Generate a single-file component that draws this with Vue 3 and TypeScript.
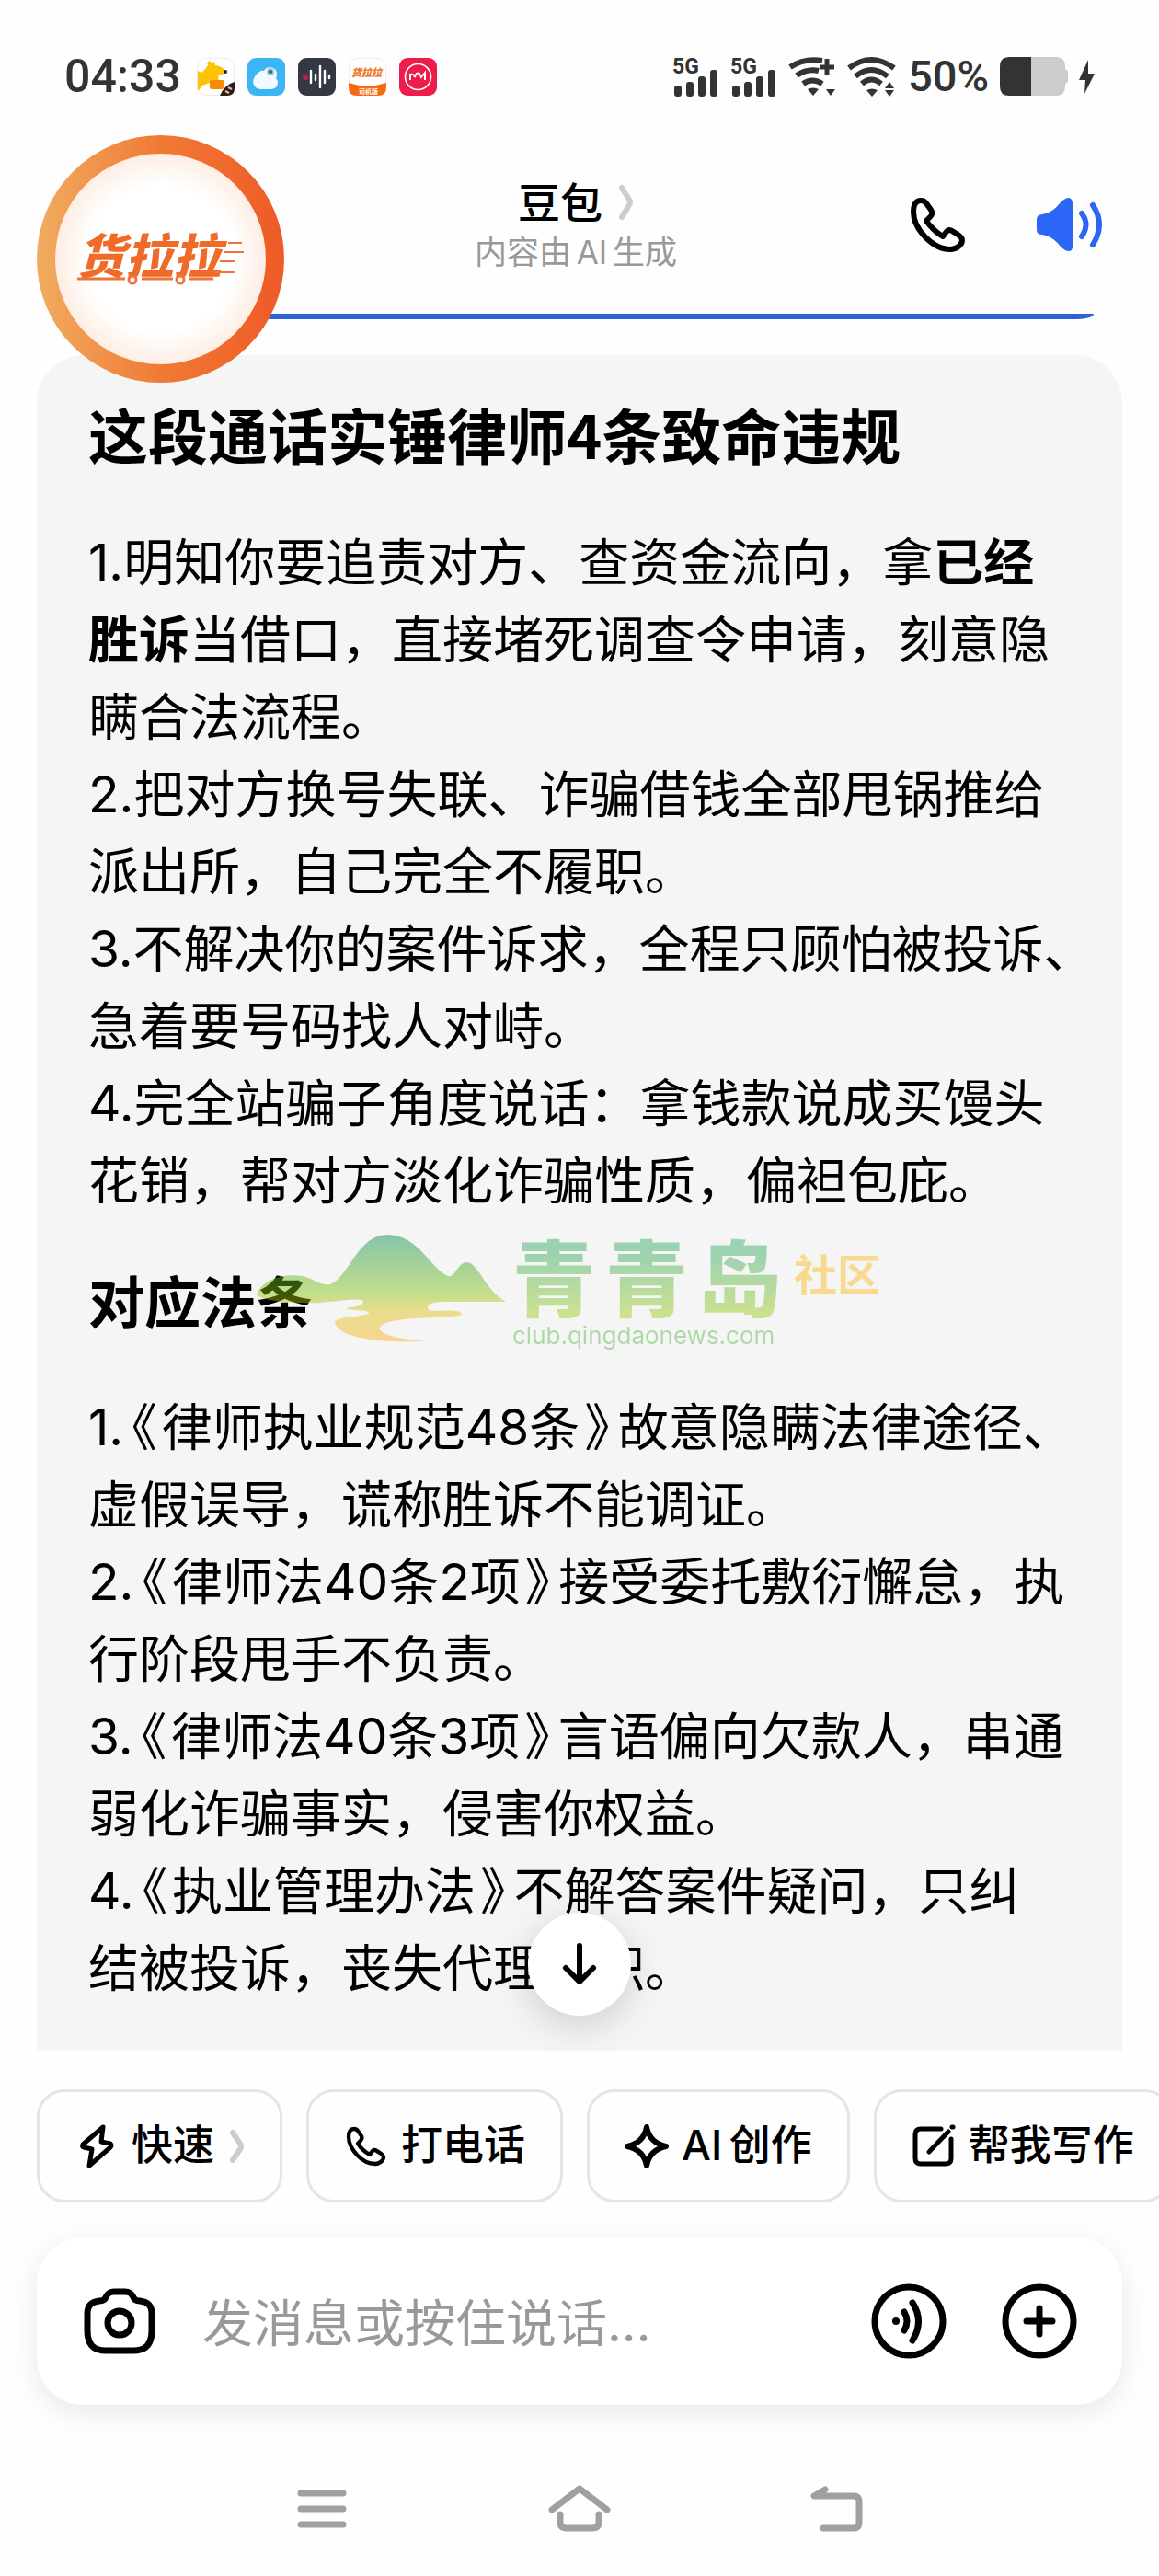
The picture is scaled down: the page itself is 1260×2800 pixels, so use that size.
<script setup lang="ts">
import { ref } from 'vue'

interface Segment {
  text: string
  kind?: 'bold' | 'open' | 'close'
}

const message = ref('')

const violations: Segment[][] = [
  [
    { text: '1.明知你要追责对方、查资金流向，拿' },
    { text: '已经\n胜诉', kind: 'bold' },
    { text: '当借口，直接堵死调查令申请，刻意隐\n瞒合法流程。' },
  ],
  [{ text: '2.把对方换号失联、诈骗借钱全部甩锅推给\n派出所，自己完全不履职。' }],
  [{ text: '3.不解决你的案件诉求，全程只顾怕被投诉、\n急着要号码找人对峙。' }],
  [{ text: '4.完全站骗子角度说话：拿钱款说成买馒头\n花销，帮对方淡化诈骗性质，偏袒包庇。' }],
]

function statute(num: string, title: string, rest: string): Segment[] {
  return [
    { text: num },
    { text: '《', kind: 'open' },
    { text: title },
    { text: '》', kind: 'close' },
    { text: rest },
  ]
}

const statutes: Segment[][] = [
  statute('1.', '律师执业规范48条', '故意隐瞒法律途径、\n虚假误导，谎称胜诉不能调证。'),
  statute('2.', '律师法40条2项', '接受委托敷衍懈怠，执\n行阶段甩手不负责。'),
  statute('3.', '律师法40条3项', '言语偏向欠款人，串通\n弱化诈骗事实，侵害你权益。'),
  statute('4.', '执业管理办法', '不解答案件疑问，只纠\n结被投诉，丧失代理天职。'),
]

const signals = [1, 2]
</script>

<template>
  <div class="page">
    <div class="status">
      <div class="status-left">
        <span class="clock">04:33</span>
        <svg class="app" viewBox="0 0 41 41">
          <rect x="0.5" y="0.5" width="40" height="40" rx="9" fill="#fff" stroke="#eee" />
          <path d="M1 14 L5 16 Q9 13 12 8 L11 5 L14 3 L16 6 L19 4 L20 8 Q28 9 32 15 Q31 18 25 18 Q22 20 24 24 H29 V33 H15 V27 Q6 28 1 36Z" fill="#fdc30a" />
          <rect x="14" y="24" width="15" height="10" rx="2" fill="#f98a08" />
          <circle cx="31" cy="15" r="2" fill="#222" />
          <path d="M41 26 V33 Q41 41 33 41 H25 Q30 29 41 26Z" fill="#2b1c19" />
          <path d="M31 36 L35 38 M34 32 L38 34" stroke="#f4b7a0" stroke-width="2" />
        </svg>
        <svg class="app" viewBox="0 0 41 41">
          <rect width="41" height="41" rx="9" fill="#3cb5f5" />
          <path d="M13 15 Q16 13 18 14 Q20 10 25 10 Q32 11 32 18 Q32 20 31 22 Q35 27 31 32 Q29 34 25 34 H14 Q7 33 6 26 Q7 19 13 15Z" fill="#f1faff" />
          <circle cx="25" cy="15" r="4" fill="#9ac3dd" />
          <circle cx="25" cy="15" r="2" fill="#35566b" />
        </svg>
        <svg class="app" viewBox="0 0 41 41">
          <rect width="41" height="41" rx="9" fill="#333842" />
          <circle cx="8" cy="21" r="3" fill="#c01d4b" />
          <path d="M14 14 V27 M19 18 V24 M24 9 V32 M29 14 V27 M34 19 V22" stroke="#fff" stroke-width="2.4" stroke-linecap="round" />
        </svg>
        <svg class="app" viewBox="0 0 41 41">
          <rect x="0.5" y="0.5" width="40" height="40" rx="9" fill="#fff" stroke="#eee" />
          <path d="M0 27 Q20 34 41 27 V32 Q41 41 32 41 H9 Q0 41 0 32Z" fill="#f6690f" />
          <text x="3" y="20" font-size="11" font-weight="900" font-style="italic" fill="#f0741e">货拉拉</text>
          <text x="11" y="39" font-size="7" font-weight="700" fill="#fff">司机版</text>
        </svg>
        <svg class="app" viewBox="0 0 41 41">
          <rect width="41" height="41" rx="9" fill="#ee1c4b" />
          <circle cx="20.500" cy="20.500" r="14" fill="none" stroke="#fff" stroke-width="1.6" />
          <path d="M12 24 V18 Q16 17 17 21 Q18 15 22 17 L24 21 L28 16 V24" fill="none" stroke="#fff" stroke-width="2" />
        </svg>
      </div>
      <div class="status-right">
        <svg v-for="n in signals" :key="n" class="signal" viewBox="0 0 50 43">
          <text x="0" y="18" font-size="23" font-weight="700">5G</text>
          <rect x="2" y="31" width="8" height="12" rx="3" />
          <rect x="15" y="27" width="8" height="16" rx="3" />
          <rect x="28" y="21" width="8" height="22" rx="3" />
          <rect x="41" y="14" width="8" height="29" rx="3" />
        </svg>
        <svg class="wifi" viewBox="0 0 53 43">
          <g class="arcs">
            <path d="M2 11 Q17 1 37 4" />
            <path d="M9 20 Q21 12 33 15" />
            <path d="M16 29 Q26 22 37 29" />
            <path d="M42 2 V19 M34 11 H50" stroke-width="5" />
          </g>
          <path d="M21 35 Q27 32 33 35 L27 42Z M41 35 H51 L46 42Z" />
        </svg>
        <svg class="wifi" viewBox="0 0 53 43">
          <g class="arcs">
            <path d="M2 12 Q26 -6 51 12" />
            <path d="M9 21 Q26 7 44 21" />
            <path d="M16 29 Q26 20 37 29" />
          </g>
          <path d="M21 36 Q27 33 33 36 L27 43Z M41 34 L46 27 L51 34Z M41 36 H51 L46 43Z" />
        </svg>
        <span class="percent">50%</span>
        <svg class="battery" viewBox="0 0 74 42">
          <path d="M34 0 H61 Q71 0 71 10 V13 Q74 14 74 17 V25 Q74 28 71 29 V32 Q71 42 61 42 H34Z" fill="#ccc" />
          <path d="M34 0 V42 H10 Q0 42 0 32 V10 Q0 0 10 0Z" />
        </svg>
        <svg class="charge" viewBox="0 0 17 37">
          <path d="M10 0 L0 22 H7 L6 37 L17 15 H10Z" />
        </svg>
      </div>
    </div>

    <header class="header">
      <div class="courier">
        <span class="courier-name">货拉拉</span>
        <svg class="courier-lines" viewBox="0 0 190 60">
          <g fill="none" stroke="#f0743a" stroke-width="2">
            <path d="M166 11 H181 M161 21 H183 M157 31 H173 M152 43 H173" />
            <path d="M2 50 H54 M72 50 H106 M124 50 H150" stroke-width="3" />
            <circle cx="62" cy="51" r="4" fill="#fff" stroke-width="3" />
            <circle cx="114" cy="51" r="4" fill="#fff" stroke-width="3" />
          </g>
        </svg>
      </div>
      <div class="titles">
        <h1 class="title">
          豆包
          <svg class="title-arrow" viewBox="0 0 16 38"><path d="M3 3 L11 16 Q13 19 11 22 L3 35" /></svg>
        </h1>
        <p class="subtitle">内容由&#8198;AI&#8198;生成</p>
      </div>
      <div class="actions">
        <button type="button" aria-label="通话">
          <svg class="ic-phone" viewBox="0 0 59 59">
            <path d="M11 3 C5 3 3 9 3 15 C3 34 24 56 43 56 C50 56 56 51 56 46 C56 43 53 41 50 39 L45 36 C42 34 40 35 38 38 L35 42 C28 38 20 30 17 25 L21 21 C24 18 24 16 22 13 L17 6 C15 3 13 3 11 3Z" />
          </svg>
        </button>
        <button type="button" aria-label="朗读">
          <svg class="ic-speaker" viewBox="0 0 71 59">
            <path d="M0 24 Q0 18 6 18 L10 17 Q18 15 26 5 Q31 0 35 0 Q39 1 39 6 V53 Q39 58 35 58 Q31 58 26 53 Q18 43 10 41 L6 40 Q0 40 0 35Z" fill="#2c66f6" />
            <path d="M49 17 Q58 29 49 42 M61 8 Q75 29 61 51" fill="none" stroke="#2c66f6" stroke-width="6" stroke-linecap="round" />
          </svg>
        </button>
      </div>
    </header>
    <div class="rule"></div>

    <main class="card">
      <h2 class="heading-main">这段通话实锤律师4条致命违规</h2>
      <div class="body">
        <p v-for="(item, i) in violations" :key="i"><span v-for="(s, j) in item" :key="j" :class="s.kind">{{ s.text }}</span></p>
      </div>
      <h3 class="heading-sub">对应法条</h3>
      <div class="body">
        <p v-for="(item, i) in statutes" :key="i"><span v-for="(s, j) in item" :key="j" :class="s.kind">{{ s.text }}</span></p>
      </div>

      <div class="watermark">
        <svg class="hill" viewBox="0 0 272 118">
          <defs>
            <linearGradient id="hill" x1="0" y1="0" x2="0" y2="1">
              <stop offset="0" stop-color="#008a4c" />
              <stop offset="0.55" stop-color="#86c40c" />
              <stop offset="0.72" stop-color="#e0c010" />
              <stop offset="1" stop-color="#f8b018" />
            </linearGradient>
          </defs>
          <path d="M0 64 C8 48 28 42 50 45 C62 48 70 56 80 54 C100 46 110 0 142 0 C176 0 190 38 208 45 C216 47 219 30 228 30 C242 31 246 58 271 73 H200 C184 74 182 82 192 83 C210 82 222 82 223 86 C222 90 200 89 172 91 C146 93 132 97 134 103 C138 110 160 114 184 116 C130 118 90 112 85 96 C84 88 120 90 122 85 C122 82 110 83 98 81 C96 78 114 80 116 73 C112 66 78 76 48 74 C26 74 0 70 0 64Z" fill="url(#hill)" />
        </svg>
        <div class="wm-name">
          <div class="wm-brand"><span>青</span><span>青</span><span>岛</span></div>
          <div class="wm-url">club.qingdaonews.com</div>
        </div>
        <div class="wm-tag">社区</div>
      </div>

      <button type="button" class="to-bottom" aria-label="回到底部">
        <svg viewBox="0 0 36 46"><path d="M18 3 V42 M3 27 L18 42 L33 27" /></svg>
      </button>
    </main>

    <div class="chips">
      <button type="button" class="chip">
        <svg class="chip-ic" viewBox="0 0 48 48"><path d="M31 3 L9 22 Q8 24 10 25 L19 27 L16 45 L39 25 Q41 23 39 21 L29 19Z" stroke-width="5" /></svg>
        <span>快速</span>
        <svg class="chip-arrow" viewBox="0 0 16 36"><path d="M3 3 L11 15 Q13 18 11 21 L3 33" /></svg>
      </button>
      <button type="button" class="chip">
        <svg class="chip-ic" viewBox="-4 -4 67 67">
          <path d="M11 3 C5 3 3 9 3 15 C3 34 24 56 43 56 C50 56 56 51 56 46 C56 43 53 41 50 39 L45 36 C42 34 40 35 38 38 L35 42 C28 38 20 30 17 25 L21 21 C24 18 24 16 22 13 L17 6 C15 3 13 3 11 3Z" stroke-width="6" />
        </svg>
        <span>打电话</span>
      </button>
      <button type="button" class="chip">
        <svg class="chip-ic" viewBox="0 0 48 48"><path d="M24 3 Q27 20 45 24 Q27 28 24 45 Q21 28 3 24 Q21 20 24 3Z" stroke-width="6" /></svg>
        <span>AI&#8198;创作</span>
      </button>
      <button type="button" class="chip">
        <svg class="chip-ic" viewBox="0 0 48 48">
          <path d="M32 5 H10 Q4 5 4 11 V37 Q4 43 10 43 H37 Q43 43 43 37 V16" stroke-width="5" />
          <path d="M19 30 L40 8 M44 3 L45 3" stroke-width="5" />
        </svg>
        <span>帮我写作</span>
      </button>
    </div>

    <div class="composer">
      <button type="button" aria-label="拍照">
        <svg class="ic-camera" viewBox="0 0 78 72">
          <path d="M33 4 H45 C50 4 52 6 54 10 C55 13 57 14 61 14 C70 15 74 19 74 28 V46 C74 62 67 68 54 68 H24 C11 68 4 62 4 46 V28 C4 19 8 15 17 14 C21 14 23 13 24 10 C26 6 28 4 33 4Z" />
          <circle cx="39" cy="38" r="13" />
        </svg>
      </button>
      <input v-model="message" type="text" class="field" aria-label="发消息" placeholder="发消息或按住说话..." />
      <button type="button" aria-label="语音">
        <svg class="ic-round" viewBox="0 0 82 82">
          <circle cx="41" cy="41" r="37" />
          <path d="M36 31 Q42 41 36 51 M45 21 Q58 41 45 62" />
          <circle cx="27" cy="41" r="4" class="dot" />
        </svg>
      </button>
      <button type="button" class="more" aria-label="更多">
        <svg class="ic-round" viewBox="0 0 82 82">
          <circle cx="41" cy="41" r="37" />
          <path d="M41 27 V55 M27 41 H55" />
        </svg>
      </button>
    </div>

    <nav class="nav">
      <button type="button" aria-label="最近任务">
        <svg viewBox="0 0 70 54"><path d="M12 10 H58 M12 27 H58 M12 44 H58" /></svg>
      </button>
      <button type="button" aria-label="主页">
        <svg viewBox="0 0 70 54"><path d="M5 28 L35 5 L65 28 M14 33 V41 Q14 48 21 48 H49 Q56 48 56 41 V33" /></svg>
      </button>
      <button type="button" aria-label="返回">
        <svg viewBox="0 0 70 54"><path d="M22 6 L10 13 H53 Q59 13 59 19 V42 Q59 48 53 48 H20" /></svg>
      </button>
    </nav>
  </div>
</template>

<style>
body {
  background: #fefefe;
}
</style>

<style scoped>
.page {
  background: #fefefe;
  color: #000;
  font-family: Inter, 'Noto Sans CJK SC', sans-serif;
  overflow: hidden;
}
button {
  margin: 0;
  padding: 0;
  border: 0;
  background: none;
  color: inherit;
  font: inherit;
}
h1, h2, h3, p {
  margin: 0;
}
svg {
  display: block;
  flex: none;
  overflow: visible;
}

.status {
  display: flex;
  align-items: flex-start;
  justify-content: space-between;
  padding: 62px 70px 43px 70px;
  color: #333;
  fill: #333;
}
.status-left,
.status-right {
  display: flex;
  align-items: center;
  height: 42px;
}
.status-left {
  gap: 14px;
}
.clock {
  margin-right: 3px;
  font: 500 50px/42px Roboto, sans-serif;
}
.app {
  width: 41px;
  height: 41px;
}
.app text {
  font-family: 'Noto Sans CJK SC', sans-serif;
}
.signal {
  width: 50px;
  height: 43px;
  margin-right: 13px;
}
.signal text {
  font-family: Roboto, sans-serif;
}
.wifi {
  width: 53px;
  height: 43px;
  margin-right: 11px;
}
.arcs {
  fill: none;
  stroke: #333;
  stroke-width: 6px;
}
.percent {
  margin-left: 2px;
  font: 500 47px/42px Roboto, sans-serif;
}
.battery {
  width: 74px;
  height: 42px;
  margin: 0 12px;
}
.charge {
  width: 17px;
  height: 37px;
}

.header {
  position: relative;
  display: grid;
  grid-template-columns: 1fr auto 1fr;
  align-items: center;
  height: 194px;
  padding: 0 62px 0 54px;
}
.courier {
  position: absolute;
  z-index: 2;
  top: 0;
  left: 40px;
  width: 269px;
  height: 269px;
  box-sizing: border-box;
  border: 20px solid transparent;
  border-radius: 50%;
  background:
    radial-gradient(circle closest-side, #fff 70%, #fdeee3) padding-box,
    linear-gradient(90deg, #f0ac60, #f17a35 50%, #ee5a26) border-box;
}
.courier-name {
  position: absolute;
  top: 79px;
  left: 24px;
  color: #f06a28;
  font: italic 900 52px/60px 'Noto Sans CJK SC', sans-serif;
}
.courier-lines {
  position: absolute;
  top: 86px;
  left: 22px;
  width: 190px;
  height: 60px;
}
.titles {
  grid-column: 2;
  display: flex;
  flex-direction: column;
  align-items: center;
}
.title {
  display: flex;
  align-items: center;
  gap: 18px;
  font-size: 46px;
  font-weight: 500;
  line-height: 60px;
}
.title-arrow {
  width: 16px;
  height: 38px;
}
.title-arrow path,
.chip-arrow path {
  fill: none;
  stroke: #ccc;
  stroke-width: 6px;
  stroke-linecap: round;
}
.subtitle {
  color: #999;
  font-size: 35px;
  line-height: 48px;
}
.actions {
  display: flex;
  justify-content: flex-end;
  gap: 78px;
}
.ic-phone {
  width: 59px;
  height: 59px;
  fill: none;
  stroke: #000;
  stroke-width: 6px;
  stroke-linejoin: round;
}
.ic-speaker {
  width: 71px;
  height: 59px;
}
.rule {
  height: 6px;
  margin: 0 71px;
  border-radius: 0 0 18px 18px / 0 0 6px 6px;
  background: #3060d6;
}

.card {
  position: relative;
  margin: 39px 40px 0;
  padding: 41px 16px 48px 56px;
  border-radius: 52px 52px 0 0;
  background: #f5f5f5;
}
.heading-main,
.heading-sub {
  font-family: 'Noto Sans CJK SC', sans-serif;
  font-weight: 700;
}
.heading-main {
  margin-bottom: 54px;
  font-size: 65px;
  line-height: 88px;
}
.heading-sub {
  margin: 46px 0 54px;
  font-size: 61px;
  line-height: 84px;
}
.body {
  font-size: 55px;
  line-height: 84px;
  white-space: pre-line;
}
.bold {
  font-weight: 700;
}
/* Book-title marks are set proportionally, as kerned punctuation */
.open,
.close {
  font-feature-settings: 'palt';
}
.open {
  margin: 0 6px 0 8px;
}
.close {
  margin: 0 8px 0 6px;
}

.watermark {
  position: absolute;
  top: 956px;
  left: 239px;
  display: flex;
  align-items: flex-start;
  opacity: 0.45;
}
.hill {
  width: 272px;
  height: 118px;
}
.wm-name {
  width: 292px;
  margin-left: 6px;
  color: #58b848;
}
.wm-brand {
  display: flex;
  justify-content: space-between;
  font-size: 90px;
  font-weight: 900;
  line-height: 100px;
}
.wm-brand span {
  color: transparent;
  background: linear-gradient(#30a860 20%, #a0cc10 90%);
  background-clip: text;
}
.wm-url {
  font-size: 26px;
  line-height: 20px;
}
.wm-tag {
  margin: 14px 0 0 14px;
  color: #fab818;
  font-size: 47px;
  font-weight: 700;
  line-height: 60px;
}

.to-bottom {
  position: absolute;
  bottom: 38px;
  left: 50%;
  display: grid;
  place-items: center;
  width: 112px;
  height: 112px;
  margin-left: -56px;
  border-radius: 50%;
  background: #fff;
  box-shadow: 0 10px 40px rgba(0, 0, 0, 0.16);
}
.to-bottom svg {
  width: 36px;
  height: 46px;
  fill: none;
  stroke: #000;
  stroke-width: 6px;
  stroke-linecap: round;
  stroke-linejoin: round;
}

.chips {
  display: flex;
  gap: 26px;
  margin-top: 42px;
  padding-left: 40px;
}
.chip {
  display: flex;
  flex: none;
  align-items: center;
  gap: 14px;
  box-sizing: border-box;
  height: 123px;
  padding: 0 38px;
  border: 3px solid #e5e5e5;
  border-radius: 30px;
  font-size: 45px;
  font-weight: 500;
  line-height: 60px;
  white-space: nowrap;
}
.chip span {
  padding-bottom: 2px;
}
.chip-ic {
  width: 48px;
  height: 48px;
  fill: none;
  stroke: #000;
  stroke-linecap: round;
  stroke-linejoin: round;
}
.chip-arrow {
  width: 16px;
  height: 36px;
  margin-left: 3px;
}

.composer {
  display: flex;
  align-items: center;
  height: 182px;
  margin: 38px 40px 0;
  padding: 0 49px 0 51px;
  box-sizing: border-box;
  border-radius: 50px;
  background: #fff;
  box-shadow: 0 8px 30px rgba(0, 0, 0, 0.09);
}
.ic-camera {
  width: 78px;
  height: 72px;
  fill: none;
  stroke: #000;
  stroke-width: 7px;
}
.field {
  flex: 1;
  min-width: 0;
  height: 84px;
  margin: 0 52px 0 51px;
  padding: 4px 0 0;
  box-sizing: border-box;
  border: 0;
  outline: 0;
  background: none;
  color: #000;
  font: inherit;
  font-size: 55px;
}
.field::placeholder {
  color: #999;
  opacity: 1;
}
.ic-round {
  width: 82px;
  height: 82px;
  fill: none;
  stroke: #000;
  stroke-width: 7px;
  stroke-linecap: round;
}
.dot {
  fill: #000;
  stroke: none;
}
.more {
  margin-left: 60px;
}

.nav {
  display: flex;
  justify-content: center;
  gap: 210px;
  padding: 86px 0 46px;
}
.nav svg {
  width: 70px;
  height: 54px;
  fill: none;
  stroke: #a0a0a0;
  stroke-width: 7px;
  stroke-linecap: round;
  stroke-linejoin: round;
}
</style>
